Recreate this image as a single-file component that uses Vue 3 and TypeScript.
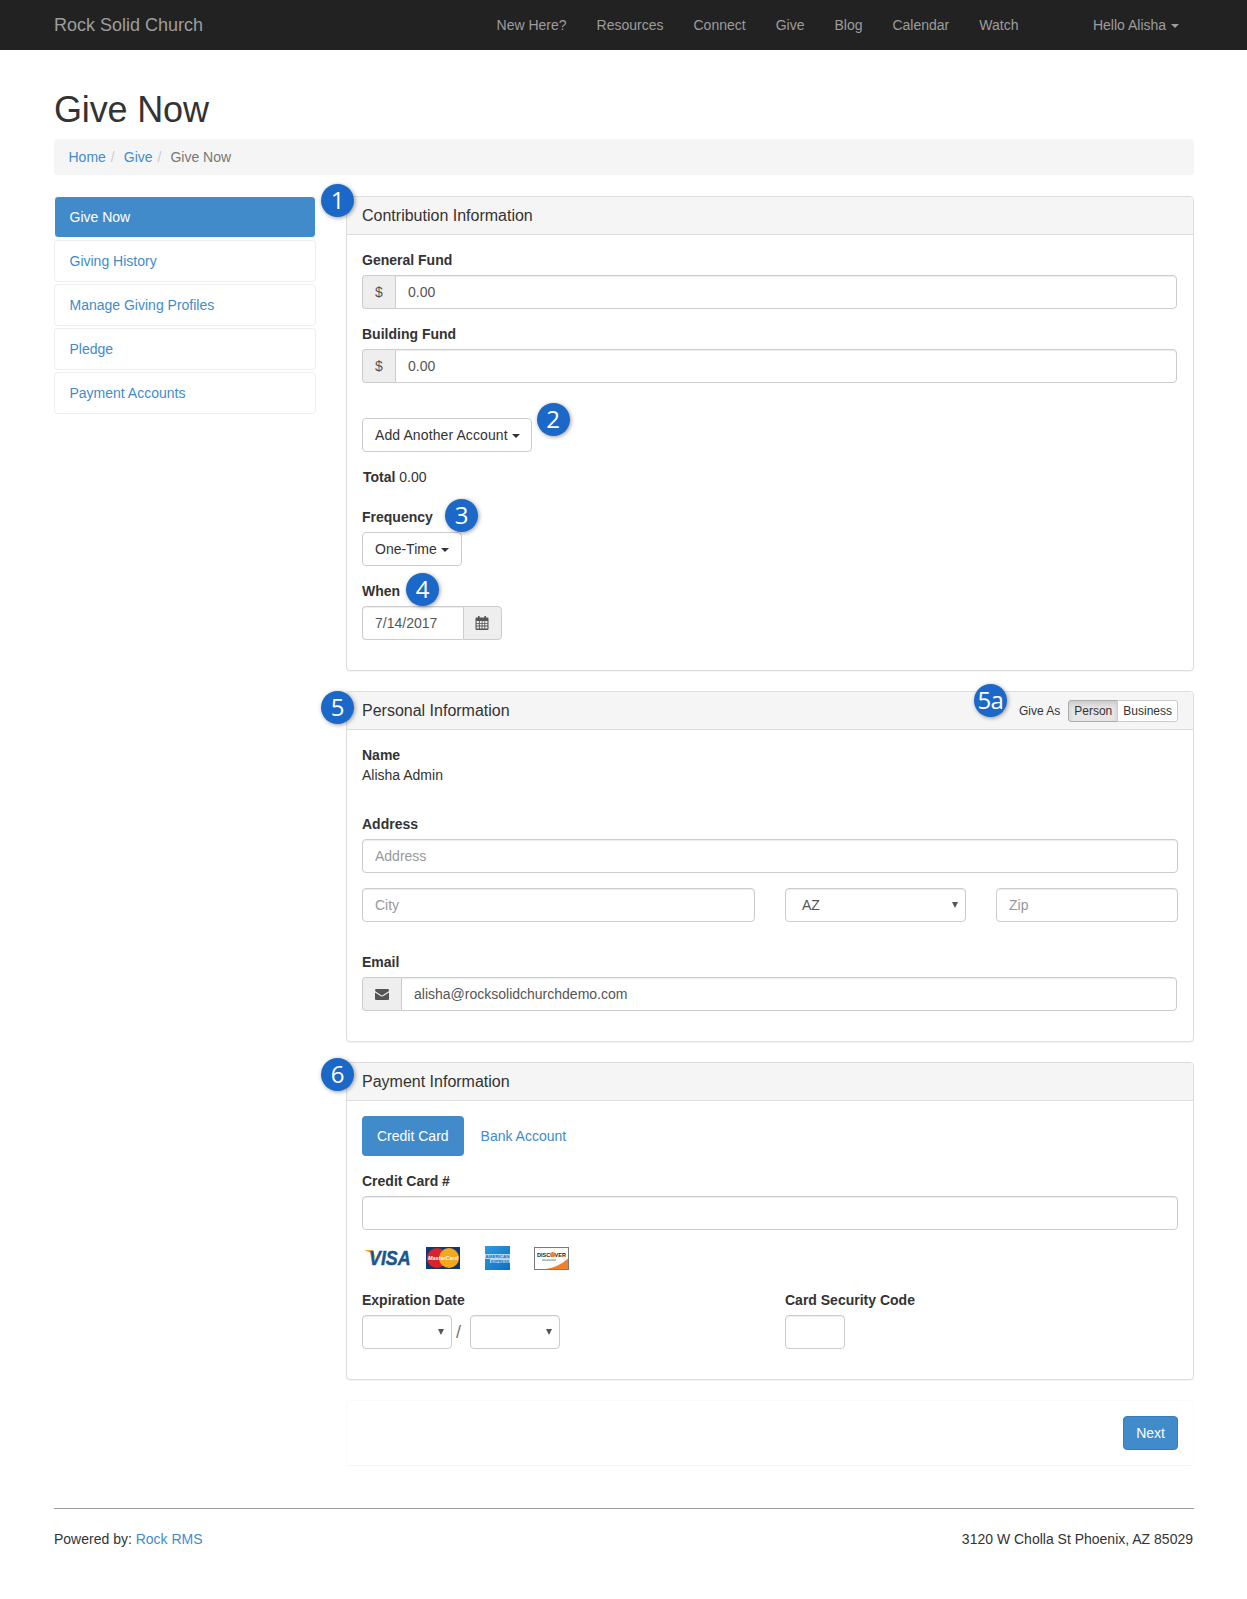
<script setup lang="ts">
const navLinks: string[] = ['New Here?', 'Resources', 'Connect', 'Give', 'Blog', 'Calendar', 'Watch']
const sideLinks: string[] = ['Give Now', 'Giving History', 'Manage Giving Profiles', 'Pledge', 'Payment Accounts']
</script>

<template>
  <div class="page">
    <header class="navbar">
      <div class="container nav-inner">
        <a class="brand">Rock Solid Church</a>
        <nav class="nav-links">
          <a v-for="l in navLinks" :key="l" class="nav-link">{{ l }}</a>
        </nav>
        <a class="nav-link user">Hello Alisha <span class="caret"></span></a>
      </div>
    </header>

    <main class="container main">
      <h1 class="title">Give Now</h1>
      <ol class="breadcrumb">
        <li><a>Home</a></li>
        <li class="sep-item"><a>Give</a></li>
        <li class="sep-item current">Give Now</li>
      </ol>

      <div class="columns">
        <aside class="sidebar">
          <a v-for="(s, i) in sideLinks" :key="s" class="side-item" :class="{ active: i === 0 }">{{ s }}</a>
        </aside>

        <div class="content">
          <section class="panel">
            <span class="badge b-1">1</span>
            <div class="panel-heading">Contribution Information</div>
            <div class="panel-body">
              <div class="group">
                <label class="label">General Fund</label>
                <div class="input-group">
                  <span class="addon dollar">$</span>
                  <input class="input joined" value="0.00" />
                </div>
              </div>
              <div class="group">
                <label class="label">Building Fund</label>
                <div class="input-group">
                  <span class="addon dollar">$</span>
                  <input class="input joined" value="0.00" />
                </div>
              </div>
              <div class="add-row">
                <div class="rel">
                  <button class="btn add-btn">Add Another Account <span class="caret dark"></span></button>
                  <span class="badge b-add">2</span>
                </div>
              </div>
              <div class="total"><b>Total</b> 0.00</div>
              <div class="group">
                <label class="label rel">Frequency<span class="badge b-freq">3</span></label>
                <button class="btn block">One-Time <span class="caret dark"></span></button>
              </div>
              <div class="group">
                <label class="label rel">When<span class="badge b-when">4</span></label>
                <div class="input-group date">
                  <input class="input joined-r" value="7/14/2017" />
                  <span class="addon cal">
                    <svg width="14" height="14" viewBox="0 0 14 14" aria-hidden="true">
                      <path fill="#555" fill-rule="evenodd" d="M3 0h1.6v1.6h4.8V0H11v1.6h1.6c.5 0 .9.4.9.9v10.6c0 .5-.4.9-.9.9H1.4c-.5 0-.9-.4-.9-.9V2.500c0-.5.400-.9.900-.9H3V0zM1.600 5v1.900h2.300V5H1.600zm3.200 0v1.900h1.900V5H4.800zm2.700 0v1.900h1.900V5H7.500zm2.700 0v1.900h2.200V5h-2.200zM1.600 7.700v1.900h2.300V7.700H1.600zm3.200 0v1.900h1.900V7.700H4.800zm2.700 0v1.900h1.900V7.700H7.500zm2.700 0v1.900h2.200V7.700h-2.200zM1.600 10.400v2.200h2.300v-2.200H1.600zm3.200 0v2.200h1.900v-2.200H4.800zm2.700 0v2.200h1.900v-2.200H7.500zm2.700 0v2.200h2.200v-2.200h-2.200z"/>
                    </svg>
                  </span>
                </div>
              </div>
            </div>
          </section>

          <section class="panel">
            <span class="badge b-5">5</span>
            <div class="panel-heading split">
              <span>Personal Information</span>
              <div class="give-as">
                <span class="badge b-5a">5a</span>
                <span class="give-label">Give As</span>
                <div class="toggle">
                  <span class="toggle-btn on">Person</span>
                  <span class="toggle-btn">Business</span>
                </div>
              </div>
            </div>
            <div class="panel-body">
              <div class="name-block">
                <label class="label tight">Name</label>
                <div class="static">Alisha Admin</div>
              </div>
              <div class="group">
                <label class="label">Address</label>
                <input class="input" placeholder="Address" />
              </div>
              <div class="addr-row">
                <input class="input city" placeholder="City" />
                <div class="select-wrap state">
                  <select class="input select state-select"><option>AZ</option></select>
                  <span class="arrow"></span>
                </div>
                <input class="input zip" placeholder="Zip" />
              </div>
              <div class="group">
                <label class="label">Email</label>
                <div class="input-group">
                  <span class="addon mail">
                    <svg width="14" height="11" viewBox="0 0 14 11" aria-hidden="true">
                      <path fill="#555" d="M0 1.300C0 .6.600 0 1.300 0h11.400C13.400 0 14 .6 14 1.300c0 .5-.3.9-.7 1.200L7.600 6.300c-.4.250-.8.250-1.200 0L.7 2.500C.3 2.200 0 1.800 0 1.300zM0 3.600l5.900 3.700c.7.400 1.500.4 2.200 0L14 3.600v6.100c0 .7-.6 1.300-1.300 1.300H1.300C.6 11 0 10.400 0 9.700V3.600z"/>
                    </svg>
                  </span>
                  <input class="input joined" value="alisha@rocksolidchurchdemo.com" />
                </div>
              </div>
            </div>
          </section>

          <section class="panel">
            <span class="badge b-6">6</span>
            <div class="panel-heading">Payment Information</div>
            <div class="panel-body">
              <div class="pills">
                <a class="pill active">Credit Card</a>
                <a class="pill">Bank Account</a>
              </div>
              <div class="group cc">
                <label class="label">Credit Card #</label>
                <input class="input" />
              </div>
              <div class="cards">
                <svg class="card-visa" width="46" height="24" viewBox="0 0 46 24" aria-hidden="true">
                  <path fill="#f7a823" d="M0 4h6.500c1 0 1.700.5 2 1.500L10.500 13C8.500 9 5 6 0 4.500z"/>
                  <text transform="translate(4 19) scale(.85 1)" font-family="Liberation Sans, sans-serif" font-size="21" font-weight="700" font-style="italic" fill="#1a5590" stroke="#1a5590" stroke-width=".5">VISA</text>
                </svg>
                <svg class="card-mc" width="34" height="22" viewBox="0 0 34 22" aria-hidden="true">
                  <rect width="34" height="22" fill="#12396f"/>
                  <circle cx="11" cy="11" r="10" fill="#d9222a"/>
                  <circle cx="23" cy="11" r="10" fill="#f6a81c"/>
                  <text x="17" y="13" text-anchor="middle" font-family="Liberation Sans, sans-serif" font-size="5.500" font-weight="700" font-style="italic" fill="#fff" textLength="30" lengthAdjust="spacingAndGlyphs">MasterCard</text>
                </svg>
                <svg class="card-amex" width="25" height="24" viewBox="0 0 25 24" aria-hidden="true">
                  <defs>
                    <linearGradient id="amexG" x1="0" y1="0" x2="1" y2="1">
                      <stop offset="0" stop-color="#2f9be0"/>
                      <stop offset="1" stop-color="#0d6fc0"/>
                    </linearGradient>
                  </defs>
                  <rect width="25" height="24" fill="url(#amexG)"/>
                  <rect x="0" y="8" width="25" height="5" fill="#cfe8f8" opacity=".85"/>
                  <rect x="5" y="13" width="20" height="4" fill="#cfe8f8" opacity=".85"/>
                  <text x="12.500" y="12" text-anchor="middle" font-family="Liberation Sans, sans-serif" font-size="4" font-weight="700" fill="#1672bf" textLength="24" lengthAdjust="spacingAndGlyphs">AMERICAN</text>
                  <text x="15" y="16.500" text-anchor="middle" font-family="Liberation Sans, sans-serif" font-size="4" font-weight="700" fill="#1672bf" textLength="18" lengthAdjust="spacingAndGlyphs">EXPRESS</text>
                </svg>
                <svg class="card-disc" width="35" height="23" viewBox="0 0 35 23" aria-hidden="true">
                  <rect x=".5" y=".5" width="34" height="22" fill="#fff" stroke="#7a7a7a"/>
                  <path fill="#f1802b" d="M34 11.500V22H12c9-1.500 16-5 22-10.500z"/>
                  <text x="17.500" y="10" text-anchor="middle" font-family="Liberation Sans, sans-serif" font-size="6" font-weight="700" fill="#222" textLength="29" lengthAdjust="spacingAndGlyphs">DISCOVER</text>
                  <circle cx="18.800" cy="7.600" r="2.500" fill="#f1802b"/>
                  <rect x="8" y="12.500" width="14" height="1.200" fill="#999"/>
                </svg>
              </div>
              <div class="exp-row">
                <div class="exp-col">
                  <label class="label">Expiration Date</label>
                  <div class="exp-fields">
                    <div class="select-wrap exp"><select class="input select"><option></option></select><span class="arrow"></span></div>
                    <span class="slash">/</span>
                    <div class="select-wrap exp"><select class="input select"><option></option></select><span class="arrow"></span></div>
                  </div>
                </div>
                <div class="cvv-col">
                  <label class="label">Card Security Code</label>
                  <input class="input cvv" />
                </div>
              </div>
            </div>
          </section>

          <div class="actions">
            <button class="btn-primary">Next</button>
          </div>
        </div>
      </div>

      <footer class="footer">
        <span>Powered by: <a>Rock RMS</a></span>
        <span>3120 W Cholla St Phoenix, AZ 85029</span>
      </footer>
    </main>
  </div>
</template>

<style>
html, body { margin: 0; background: #fff; }
</style>

<style scoped>
.page {
  font-family: "Liberation Sans", Arial, sans-serif;
  font-size: 14px;
  line-height: 20px;
  color: #333;
  min-height: 1599px;
  background: #fff;
}
.container { width: 1140px; margin-left: 54px; }
a { color: #428bca; text-decoration: none; }
.navbar { background: #222; height: 50px; }
.nav-inner { display: flex; align-items: center; height: 50px; }
.brand { color: #9d9d9d; font-size: 18px; line-height: 50px; }
.nav-links { margin-left: auto; display: flex; }
.nav-link { color: #9d9d9d; padding: 0 15px; line-height: 50px; white-space: nowrap; }
.user { margin-left: 44.5px; }
.caret {
  display: inline-block;
  width: 0;
  height: 0;
  vertical-align: middle;
  border-top: 4px solid #9d9d9d;
  border-left: 4px solid transparent;
  border-right: 4px solid transparent;
}
.user .caret { margin-left: 1px; }
.caret.dark { border-top-color: #333; }

.title {
  margin: 40px 0 9px;
  font-size: 36px;
  line-height: 40px;
  font-weight: 400;
  letter-spacing: -.15px;
  color: #333;
}
.breadcrumb {
  list-style: none;
  margin: 0 0 21px;
  padding: 8px 15px 8px 14.5px;
  height: 36px;
  box-sizing: border-box;
  background: #f5f5f5;
  border-radius: 4px;
  display: flex;
}
.sep-item::before { content: "/"; color: #ccc; margin: 0 9px 0 5px; }
.current { color: #777; }

.columns { display: grid; grid-template-columns: 262px 848px; column-gap: 30px; align-items: start; }
.sidebar { display: flex; flex-direction: column; gap: 2px; }
.side-item {
  display: block;
  height: 42px;
  box-sizing: border-box;
  padding: 10px 15px 10px 14.5px;
  border: 1px solid #eee;
  border-radius: 4px;
  color: #428bca;
}
.side-item.active { background: #428bca; color: #fff; border-color: #fff; }

.panel {
  position: relative;
  border: 1px solid #ddd;
  border-radius: 4px;
  margin-bottom: 20px;
  box-shadow: 0 1px 1px rgba(0, 0, 0, .05);
  background: #fff;
}
.panel-heading {
  height: 38px;
  box-sizing: border-box;
  padding: 9px 15px;
  background: #f5f5f5;
  border-bottom: 1px solid #ddd;
  border-radius: 3px 3px 0 0;
  font-size: 16px;
  line-height: 20px;
}
.panel-heading.split { display: flex; justify-content: space-between; align-items: center; padding: 0 15px; }
.panel-body { padding: 15px; }

.badge {
  position: absolute;
  width: 33px;
  height: 33px;
  border-radius: 50%;
  background: #1b68c9;
  color: #fff;
  font-family: "Open Sans", sans-serif;
  font-size: 24px;
  font-weight: 400;
  line-height: 31px;
  text-align: center;
  box-shadow: 1px 1px 4px rgba(0, 0, 0, .4);
  z-index: 2;
}
.b-1 { left: -26px; top: -13px; }
.b-5 { left: -26px; top: -1px; }
.b-6 { left: -26px; top: -5px; }
.b-add { left: calc(100% + 5px); top: -15px; }
.b-freq { left: 83px; top: -8px; }
.b-when { left: 44px; top: -8px; }
.b-5a { left: -45px; top: -16px; letter-spacing: -.5px; }

.rel { position: relative; display: block; }
.group { margin-bottom: 15px; }
.label { display: block; font-weight: 700; margin-bottom: 5px; }
.label.tight { margin-bottom: 0; }
.input-group { display: flex; }
.input {
  display: block;
  width: 100%;
  height: 34px;
  box-sizing: border-box;
  padding: 6px 12px;
  font: inherit;
  color: #555;
  background: #fff;
  border: 1px solid #ccc;
  border-radius: 4px;
  box-shadow: inset 0 1px 1px rgba(0, 0, 0, .075);
  outline: none;
}
.input::placeholder { color: #999; opacity: 1; }
.joined { border-radius: 0 4px 4px 0; flex: 1; min-width: 0; }
.joined-r { border-radius: 4px 0 0 4px; width: 101px; border-right: 0; }
.addon {
  box-sizing: border-box;
  height: 34px;
  display: flex;
  align-items: center;
  justify-content: center;
  background: #eee;
  border: 1px solid #ccc;
  color: #555;
}
.dollar, .mail { border-right: 0; border-radius: 4px 0 0 4px; }
.dollar { width: 33px; }
.mail { width: 39px; }
.cal { width: 39px; border-radius: 0 4px 4px 0; padding-right: 1px; }
.input-group:not(.date) { width: 815px; }
.date { width: 140px; }

.add-row { padding-top: 20px; margin-bottom: 15px; display: flex; }
.btn {
  height: 34px;
  box-sizing: border-box;
  padding: 6px 12px;
  font: inherit;
  color: #333;
  background: #fff;
  border: 1px solid #ccc;
  border-radius: 4px;
  white-space: nowrap;
}
.add-btn { letter-spacing: .1px; padding-right: 11px; }
.btn.block { display: block; }
.total { margin-bottom: 20px; padding-left: 1px; }

.name-block { margin-bottom: 29px; }
.static { color: #333; }
.addr-row { display: flex; margin-bottom: 30px; }
.city { width: 393px; }
.state { width: 181px; margin-left: 30px; }
.zip { width: 182px; margin-left: 30px; }
.select-wrap { position: relative; }
.select { appearance: none; -webkit-appearance: none; padding-right: 20px; color: #555; }
.state-select { padding-left: 16px; }
.arrow {
  position: absolute;
  right: 8px;
  top: 14px;
  width: 0;
  height: 0;
  border-top: 6px solid #555;
  border-left: 3px solid transparent;
  border-right: 3px solid transparent;
  pointer-events: none;
}

.give-as { position: relative; display: flex; align-items: center; font-size: 12px; line-height: 16px; }
.give-label { margin-right: 8px; }
.toggle { display: flex; }
.toggle-btn {
  box-sizing: border-box;
  height: 22px;
  padding: 2px 5px;
  background: #fff;
  border: 1px solid #ccc;
  border-radius: 0 3px 3px 0;
  margin-left: -1px;
}
.toggle-btn.on {
  margin-left: 0;
  background: #e6e6e6;
  border-color: #adadad;
  border-radius: 3px 0 0 3px;
  box-shadow: inset 0 3px 5px rgba(0, 0, 0, .125);
}

.pills { display: flex; gap: 2px; margin-bottom: 15px; }
.pill { padding: 10px 15px; height: 40px; box-sizing: border-box; border-radius: 4px; color: #428bca; }
.pill.active { background: #428bca; color: #fff; }
.group.cc { margin-bottom: 16px; }
.cards { display: flex; align-items: center; height: 24px; margin-bottom: 20px; }
.cards svg { display: block; flex: none; }
.card-visa { margin-left: 3px; }
.card-mc { margin-left: 15px; }
.card-amex { margin-left: 25px; }
.card-disc { margin-left: 24px; }
.exp-row { display: flex; padding-bottom: 15px; }
.exp-col { width: 423px; }
.exp-fields { display: flex; align-items: center; }
.exp { width: 90px; }
.slash { width: 18px; padding-right: 5px; box-sizing: border-box; text-align: center; font-size: 18px; color: #777; }
.cvv { width: 60px; }

.actions {
  display: flex;
  justify-content: flex-end;
  padding: 15px;
  border: 1px solid #fbfbfb;
  border-bottom-color: #f4f4f4;
  border-radius: 4px;
}
.btn-primary {
  height: 34px;
  box-sizing: border-box;
  padding: 6px 12px;
  font: inherit;
  color: #fff;
  background: #428bca;
  border: 1px solid #357ebd;
  border-radius: 4px;
}
.footer {
  margin-top: 42px;
  border-top: 1px solid #999;
  padding-top: 20px;
  display: flex;
  justify-content: space-between;
  padding-right: 1px;
}
</style>
